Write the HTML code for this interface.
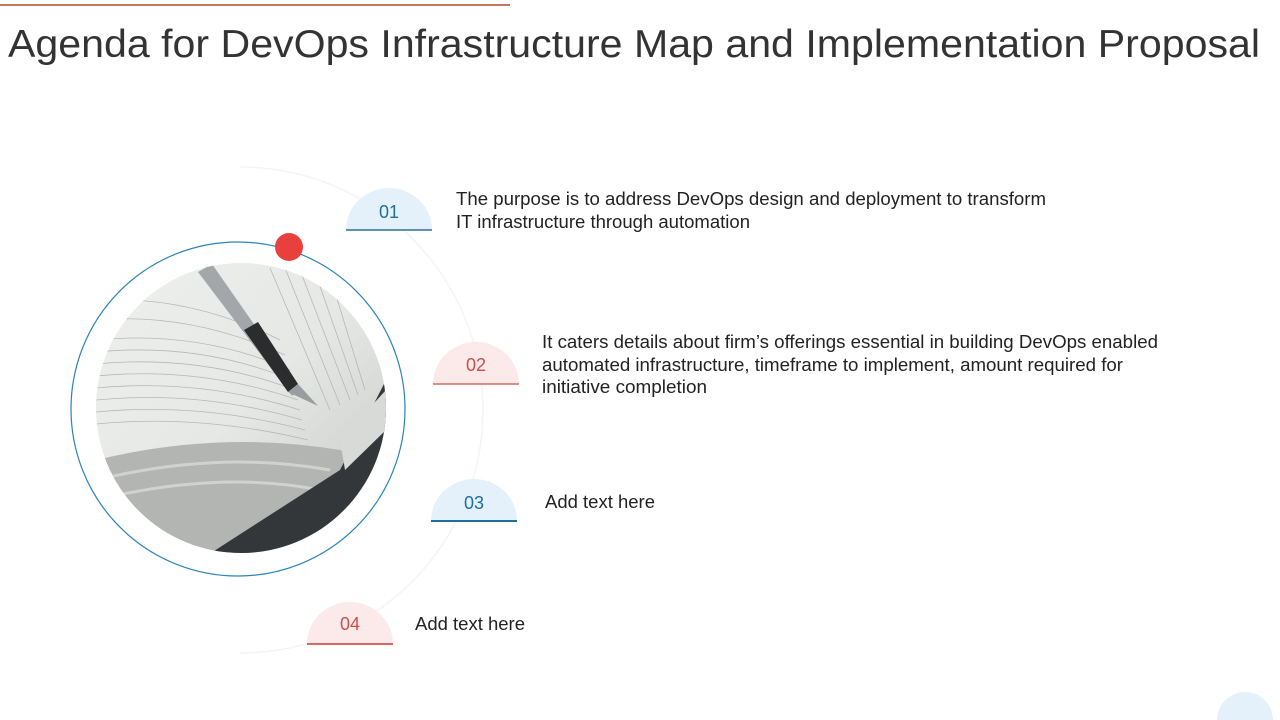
<!DOCTYPE html>
<html><head><meta charset="utf-8"><style>
html,body{margin:0;padding:0;background:#fff;width:1280px;height:720px;overflow:hidden}
svg{display:block}
text{font-family:"Liberation Sans",sans-serif}
</style></head><body>
<svg width="1280" height="720" viewBox="0 0 1280 720">
<defs>
<clipPath id="ph"><circle cx="241" cy="408" r="145"/></clipPath>
<linearGradient id="pg" x1="0" y1="0" x2="1" y2="1">
<stop offset="0" stop-color="#eef0ee"/><stop offset="0.5" stop-color="#e6e8e6"/><stop offset="1" stop-color="#c4c6c4"/></linearGradient>
</defs>
<line x1="0" y1="5" x2="510" y2="5" stroke="#c9745f" stroke-width="2"/>
<text x="8" y="57" font-size="39" fill="#333" textLength="1252" lengthAdjust="spacingAndGlyphs">Agenda for DevOps Infrastructure Map and Implementation Proposal</text>

<path d="M240 167 A243 243 0 0 1 240 653" fill="none" stroke="#f4f4f4" stroke-width="1.5"/>
<circle cx="238" cy="409" r="167" fill="none" stroke="#2b84b8" stroke-width="1.2"/>
<circle cx="289" cy="247" r="14" fill="#e8403c"/>

<g clip-path="url(#ph)">
<rect x="90" y="260" width="300" height="300" fill="url(#pg)"/>
<g stroke="#b5b8b5" stroke-width="0.8" fill="none">
<path d="M96 340 Q200 330 290 370"/><path d="M96 352 Q200 342 292 380"/><path d="M96 364 Q200 354 295 390"/>
<path d="M96 376 Q200 366 298 400"/><path d="M96 388 Q200 378 300 410"/><path d="M96 400 Q200 390 302 420"/>
<path d="M96 412 Q200 402 305 430"/><path d="M96 424 Q200 414 308 440"/><path d="M96 320 Q190 312 285 355"/>
<path d="M96 300 Q190 295 280 340"/>
<path d="M270 268 L330 410"/><path d="M285 268 L340 405"/><path d="M300 270 L350 400"/><path d="M315 272 L358 395"/><path d="M330 276 L365 390"/>
</g>
<path d="M96 460 Q220 430 340 450 L386 460 L386 560 L96 560Z" fill="#b3b5b3"/>
<path d="M96 480 Q220 450 330 470" stroke="#d0d2d0" stroke-width="3" fill="none"/>
<path d="M96 500 Q220 470 320 490" stroke="#d0d2d0" stroke-width="3" fill="none"/>
<path d="M386 380 L386 560 L200 560 L340 470 Z" fill="#34373a"/>
<path d="M340 440 L386 390 L386 430 L345 470 Z" fill="#d8dad8"/>
<path d="M198 272 L212 264 L300 390 L292 396 Z" fill="#a4a7a9"/>
<path d="M244 330 L258 322 L298 384 L288 392 Z" fill="#2a2c2e"/>
<path d="M288 392 L298 384 L318 406 Z" fill="#9a9d9f"/>
</g>

<g>
<path d="M346 230 A43 42 0 0 1 432 230 Z" fill="#e4f1fb"/><line x1="346" y1="230" x2="432" y2="230" stroke="#2b6f9a" stroke-width="1.5"/>
<text x="389" y="218" font-size="18" fill="#1f6e9c" text-anchor="middle">01</text>
<path d="M433 384 A43 42 0 0 1 519 384 Z" fill="#fceaea"/><line x1="433" y1="384" x2="519" y2="384" stroke="#d9695f" stroke-width="1.5"/>
<text x="476" y="371" font-size="18" fill="#c9504a" text-anchor="middle">02</text>
<path d="M431 521 A43 42 0 0 1 517 521 Z" fill="#e4f1fb"/><line x1="431" y1="521" x2="517" y2="521" stroke="#1f6e9c" stroke-width="2"/>
<text x="474" y="509" font-size="18" fill="#1f6e9c" text-anchor="middle">03</text>
<path d="M307 644 A43 42 0 0 1 393 644 Z" fill="#fceaea"/><line x1="307" y1="644" x2="393" y2="644" stroke="#d9695f" stroke-width="2"/>
<text x="350" y="630" font-size="18" fill="#c9504a" text-anchor="middle">04</text>
<path d="M1217 720 A28 28 0 0 1 1273 720 Z" fill="#e4f1fb"/>
</g>

<g font-size="18" fill="#222">
<text x="456" y="205" textLength="590" lengthAdjust="spacingAndGlyphs">The purpose is to address DevOps design and deployment to transform</text>
<text x="456" y="228" textLength="294" lengthAdjust="spacingAndGlyphs">IT infrastructure through automation</text>
<text x="542" y="348" textLength="616" lengthAdjust="spacingAndGlyphs">It caters details about firm’s offerings essential in building DevOps enabled</text>
<text x="542" y="371" textLength="581" lengthAdjust="spacingAndGlyphs">automated infrastructure, timeframe to implement, amount required for</text>
<text x="542" y="393" textLength="165" lengthAdjust="spacingAndGlyphs">initiative completion</text>
<text x="545" y="508" textLength="110" lengthAdjust="spacingAndGlyphs">Add text here</text>
<text x="415" y="630" textLength="110" lengthAdjust="spacingAndGlyphs">Add text here</text>
</g>
</svg>
</body></html>
